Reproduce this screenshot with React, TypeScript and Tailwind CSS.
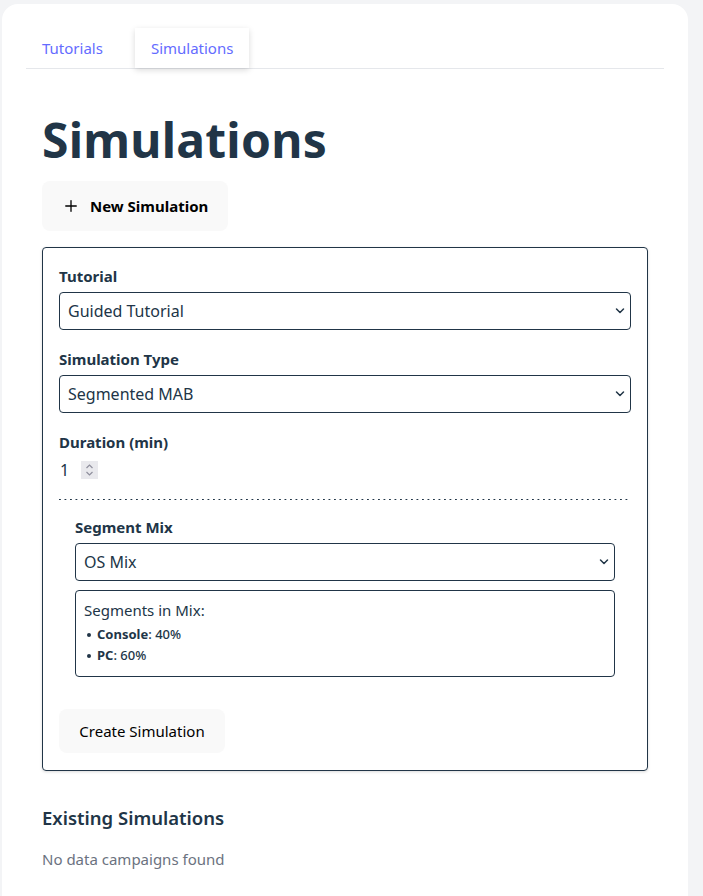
import { Plus } from "lucide-react";

function Chevron() {
    return (
        <svg
            className="pointer-events-none absolute right-[6px] top-1/2 -translate-y-1/2"
            width="10"
            height="7"
            viewBox="0 0 10 7"
            fill="none"
        >
            <path d="M1.5 1.5L5 5L8.5 1.5" stroke="#213547" strokeWidth="1.5" strokeLinecap="round" strokeLinejoin="round" />
        </svg>
    );
}

function Select({ value }: { value: string }) {
    return (
        <div className="relative">
            <select
                defaultValue={value}
                className="h-[38px] w-full appearance-none rounded-[4px] border border-[#213547] bg-white pl-2 pr-6 text-[16px] text-[#213547] outline-none"
            >
                <option>{value}</option>
            </select>
            <Chevron />
        </div>
    );
}

function Field({ label, children }: { label: string; children: React.ReactNode }) {
    return (
        <div className="flex flex-col gap-1">
            <label className="text-[15px] font-bold leading-6 text-[#213547]">{label}</label>
            {children}
        </div>
    );
}

export default function App() {
    return (
        <div
            className="min-h-[896px] bg-[#f3f4f6] pl-[2px] pt-[4px] text-[#213547]"
            style={{ fontFamily: '"Noto Sans", "Open Sans", sans-serif' }}
        >
            <div className="min-h-[892px] w-[686px] rounded-t-2xl bg-white px-6 pt-6">
                {/* tabs */}
                <div className="flex gap-4 border-b border-[#e5e7eb]">
                    <button type="button" className="h-10 px-4 pt-px text-[15px] text-[#646cff]">
                        Tutorials
                    </button>
                    <button
                        type="button"
                        className="h-10 bg-white px-4 pt-px text-[15px] text-[#646cff] shadow-[0_2px_6px_rgba(0,0,0,0.15)]"
                    >
                        Simulations
                    </button>
                </div>

                <div className="px-4">
                    <h1 className="mt-[43px] text-[48px] font-bold leading-[56px] tracking-[0.005em] text-[#213547]">
                        Simulations
                    </h1>

                    <button
                        type="button"
                        className="mt-[13px] flex h-[50px] items-center gap-[10px] rounded-lg bg-[#f9f9f9] px-[20px] text-[15px] font-bold text-black"
                    >
                        <Plus size={18} strokeWidth={1.75} />
                        New Simulation
                    </button>

                    <div className="mt-4 flex flex-col rounded-[4px] border border-[#213547] px-4 pb-[17px] pt-4 shadow-[0_1px_3px_rgba(0,0,0,0.15)]">
                        <div className="flex flex-col gap-[17px]">
                            <Field label="Tutorial">
                                <Select value="Guided Tutorial" />
                            </Field>
                            <Field label="Simulation Type">
                                <Select value="Segmented MAB" />
                            </Field>
                            <Field label="Duration (min)">
                                <div className="flex h-6 items-center gap-[12px] text-[16px]">
                                    <span className="pl-px">1</span>
                                    <span className="flex h-[18px] w-[17px] flex-col items-center justify-center bg-[#e9e9ed]">
                                        <svg width="9" height="14" viewBox="0 0 9 14" fill="none">
                                            <path d="M1.5 5L4.5 2L7.5 5" stroke="#8f8f9d" strokeWidth="1.2" />
                                            <path d="M1.5 9L4.5 12L7.5 9" stroke="#8f8f9d" strokeWidth="1.2" />
                                        </svg>
                                    </span>
                                </div>
                            </Field>
                        </div>

                        <div className="mt-[17px] h-px bg-[linear-gradient(to_right,#213547_1.5px,transparent_1.5px)] bg-[length:5.5px_1px]" />

                        <div className="px-4 pt-[15px]">
                            <Field label="Segment Mix">
                                <Select value="OS Mix" />
                            </Field>
                            <div className="mt-[9px] rounded-[4px] border border-[#213547] px-2 pb-[10px] pt-[7px]">
                                <p className="text-[15px] leading-6">Segments in Mix:</p>
                                <ul className="mt-[2px] flex flex-col text-[13px] font-medium leading-[21px]">
                                    <li className="flex items-center gap-[6px] pl-[3px]">
                                        <span className="h-[4px] w-[4px] rounded-full bg-[#213547]" />
                                        <span>
                                            <b>Console</b>: 40%
                                        </span>
                                    </li>
                                    <li className="flex items-center gap-[6px] pl-[3px]">
                                        <span className="h-[4px] w-[4px] rounded-full bg-[#213547]" />
                                        <span>
                                            <b>PC</b>: 60%
                                        </span>
                                    </li>
                                </ul>
                            </div>
                        </div>

                        <button
                            type="button"
                            className="mt-8 h-[44px] w-[166px] rounded-lg bg-[#f9f9f9] text-[15px] text-black"
                        >
                            Create Simulation
                        </button>
                    </div>

                    <h2 className="mt-[33px] text-[18.5px] font-semibold leading-7">Existing Simulations</h2>
                    <p className="mt-[15px] text-[15px] leading-6 text-[#6b7280]">No data campaigns found</p>
                </div>
            </div>
        </div>
    );
}
